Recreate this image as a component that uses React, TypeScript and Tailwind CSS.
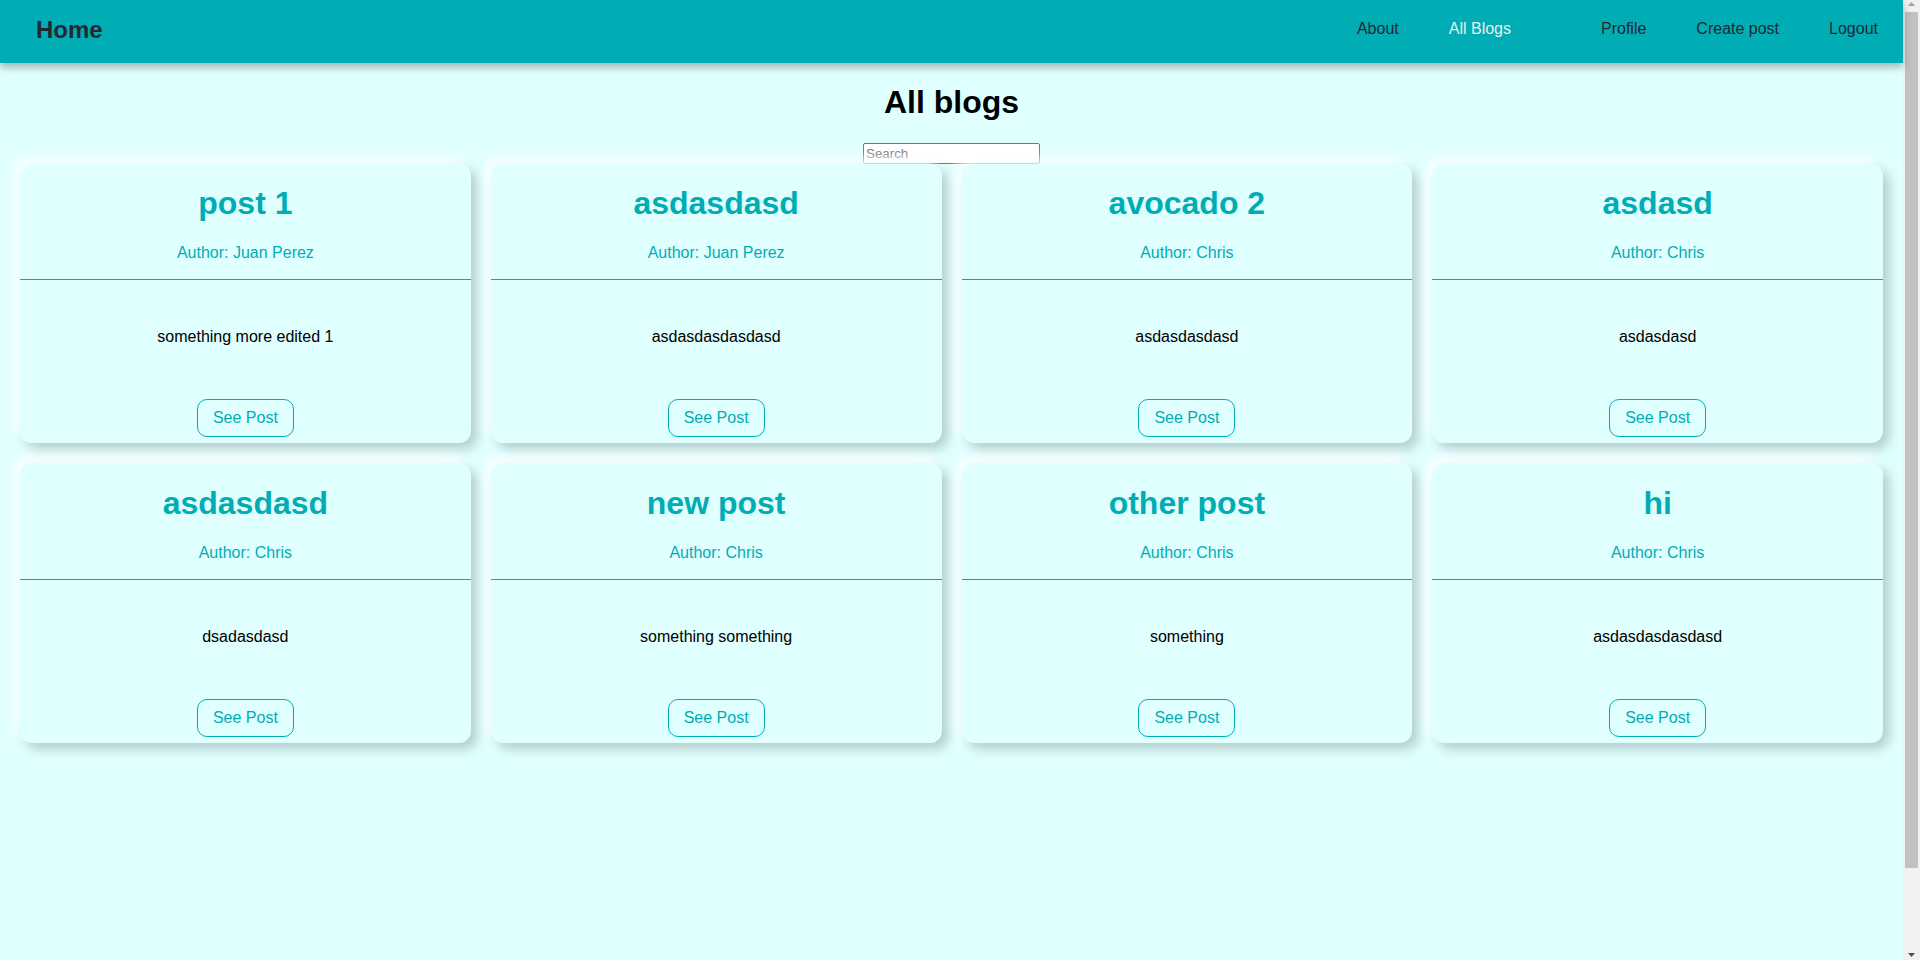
import React from 'react'

type Post = { title: string; author: string; body: string }

const POSTS: Post[] = [
  { title: 'post 1', author: 'Juan Perez', body: 'something more edited 1' },
  { title: 'asdasdasd', author: 'Juan Perez', body: 'asdasdasdasdasd' },
  { title: 'avocado 2', author: 'Chris', body: 'asdasdasdasd' },
  { title: 'asdasd', author: 'Chris', body: 'asdasdasd' },
  { title: 'asdasdasd', author: 'Chris', body: 'dsadasdasd' },
  { title: 'new post', author: 'Chris', body: 'something something' },
  { title: 'other post', author: 'Chris', body: 'something' },
  { title: 'hi', author: 'Chris', body: 'asdasdasdasdasd' },
]

function PostCard({ post }: { post: Post }) {
  return (
    <div className="flex flex-col rounded-[12px] bg-[#e0ffff] shadow-[6px_6px_12px_rgba(0,0,0,0.2),-6px_-6px_12px_rgba(255,255,255,0.9)]">
      <div className="border-b border-[#00adb5] text-center">
        <h1 className="mt-[21.4px] mb-[22.6px] text-[32px] font-bold leading-[1.149] text-[#00adb5]">{post.title}</h1>
        <p className="mb-4 text-[16px] leading-[1.149] text-[#00adb5]">Author: {post.author}</p>
      </div>
      <div className="flex flex-col items-center pt-[48px] pb-[6px]">
        <p className="text-[16px] leading-[1.149] text-black">{post.body}</p>
        <button className="mt-[53px] rounded-[10px] border border-[#00adb5] px-[15px] py-[9px] text-[16px] leading-[1.149] text-[#00adb5]">
          See Post
        </button>
      </div>
    </div>
  )
}

// browser scrollbar as it shows in the screenshot
function Scrollbar() {
  return (
    <div className="flex h-screen w-[17px] shrink-0 flex-col bg-[#f1f1f1]">
      <div className="flex h-[12px] justify-center pt-[2px]">
        <svg width="7" height="4" viewBox="0 0 7 4"><path d="M3.5 0L7 4H0z" fill="#a3a3a3" /></svg>
      </div>
      <div className="mx-[2px] h-[856px] bg-[#c1c1c1]" />
      <div className="flex-1" />
      <div className="flex h-[12px] justify-center pt-[5px]">
        <svg width="7" height="4" viewBox="0 0 7 4"><path d="M0 0H7L3.5 4z" fill="#505050" /></svg>
      </div>
    </div>
  )
}

export default function App() {
  return (
    <div className="flex h-screen overflow-hidden bg-[#e0ffff] font-['Liberation_Sans',Arial,sans-serif]">
      <div className="min-w-0 flex-1">
        {/* Navbar */}
        <nav className="relative z-10 flex h-[63px] items-center justify-between bg-[#00adb5] pb-[4px] pl-[36px] pr-[25px] shadow-[0_4px_8px_rgba(0,0,0,0.3)]">
          <a className="text-[24px] font-bold leading-[1.149] text-[#222831]">Home</a>
          <div className="flex items-center gap-[50px] text-[16px] leading-[1.149] text-[#222831]">
            <a>About</a>
            <a className="text-[#eeeeee]">All Blogs</a>
            <a className="ml-[40px]">Profile</a>
            <a>Create post</a>
            <a>Logout</a>
          </div>
        </nav>

        <h1 className="my-[21.4px] text-center text-[32px] font-bold leading-[1.149] text-black">All blogs</h1>
        <input
          placeholder="Search"
          className="mx-auto block h-[21px] w-[177px] rounded-[2px] border border-[#767676] bg-white px-[2px] text-[13.33px] placeholder:text-[#757575]"
        />

        {/* Posts */}
        <div className="grid grid-cols-4 gap-5 px-5">
          {POSTS.map((p, i) => (
            <PostCard key={i} post={p} />
          ))}
        </div>
      </div>
      <Scrollbar />
    </div>
  )
}
